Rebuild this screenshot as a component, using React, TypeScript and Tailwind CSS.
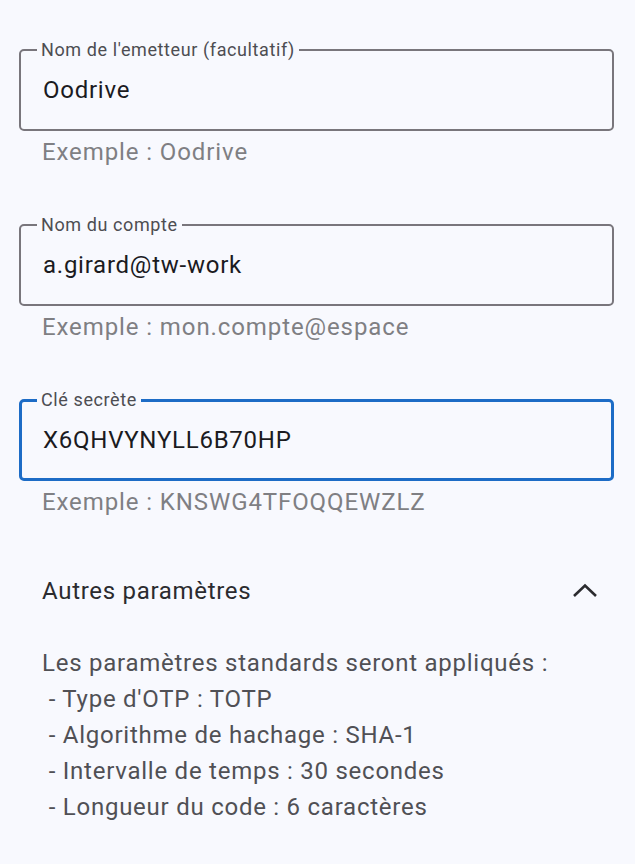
import React from "react";

function Field({
  label,
  value,
  helper,
  focused = false,
}: {
  label: string;
  value: string;
  helper: string;
  focused?: boolean;
}) {
  return (
    <div className="flex flex-col">
      <div
        className={
          focused
            ? "relative h-[82px] rounded-[5px] border-[3px] border-[#1d6cc6] flex items-center pl-[21px]"
            : "relative h-[82px] rounded-[5px] border-2 border-[#79767c] flex items-center pl-[22px]"
        }
      >
        <span
          className={
            focused
              ? "absolute left-[15px] top-[-13px] bg-[#f8f9fe] px-[4px] text-[18px] leading-[22px] tracking-[0.6px] text-[#4d4d52]"
              : "absolute left-[16px] top-[-12px] bg-[#f8f9fe] px-[4px] text-[18px] leading-[22px] tracking-[0.6px] text-[#4d4d52]"
          }
        >
          {label}
        </span>
        <span className="text-[24px] leading-[32px] tracking-[0.75px] text-[#1b1b1f]">{value}</span>
      </div>
      <div className="mt-[5px] pl-[23px] text-[24px] leading-[32px] tracking-[0.9px] text-[#7f7f83]">
        {helper}
      </div>
    </div>
  );
}

export default function App() {
  const lines = [
    "Les paramètres standards seront appliqués :",
    " - Type d'OTP : TOTP",
    " - Algorithme de hachage : SHA-1",
    " - Intervalle de temps : 30 secondes",
    " - Longueur du code : 6 caractères",
  ];
  return (
    <div
      className="min-h-[864px] w-[635px] bg-[#f8f9fe] pl-[19px] pr-[21px] pt-[49px]"
      style={{ fontFamily: "Roboto, 'Noto Sans', sans-serif" }}
    >
      <div className="flex flex-col gap-[56px]">
        <Field label="Nom de l'emetteur (facultatif)" value="Oodrive" helper="Exemple : Oodrive" />
        <Field label="Nom du compte" value="a.girard@tw-work" helper="Exemple : mon.compte@espace" />
        <Field label="Clé secrète" value="X6QHVYNYLL6B70HP" helper="Exemple : KNSWG4TFOQQEWZLZ" focused />
      </div>
      <div className="mt-[37px] flex h-[72px] items-center justify-between pl-[23px] pr-[17px]">
        <span className="text-[24px] leading-[32px] tracking-[0.7px] text-[#2b2b2f]">Autres paramètres</span>
        <svg width="24" height="16" viewBox="0 0 24 16" fill="none" stroke="#2b2b2f" strokeWidth="2.6" strokeLinecap="butt" strokeLinejoin="miter">
          <polyline points="1,13 12,2.5 23,13" />
        </svg>
      </div>
      <div className="mt-[18px] pl-[23px] text-[24px] leading-[36px] tracking-[0.75px] text-[#505055] whitespace-pre">
        {lines.map((l, i) => (
          <div key={i}>{l}</div>
        ))}
      </div>
    </div>
  );
}
